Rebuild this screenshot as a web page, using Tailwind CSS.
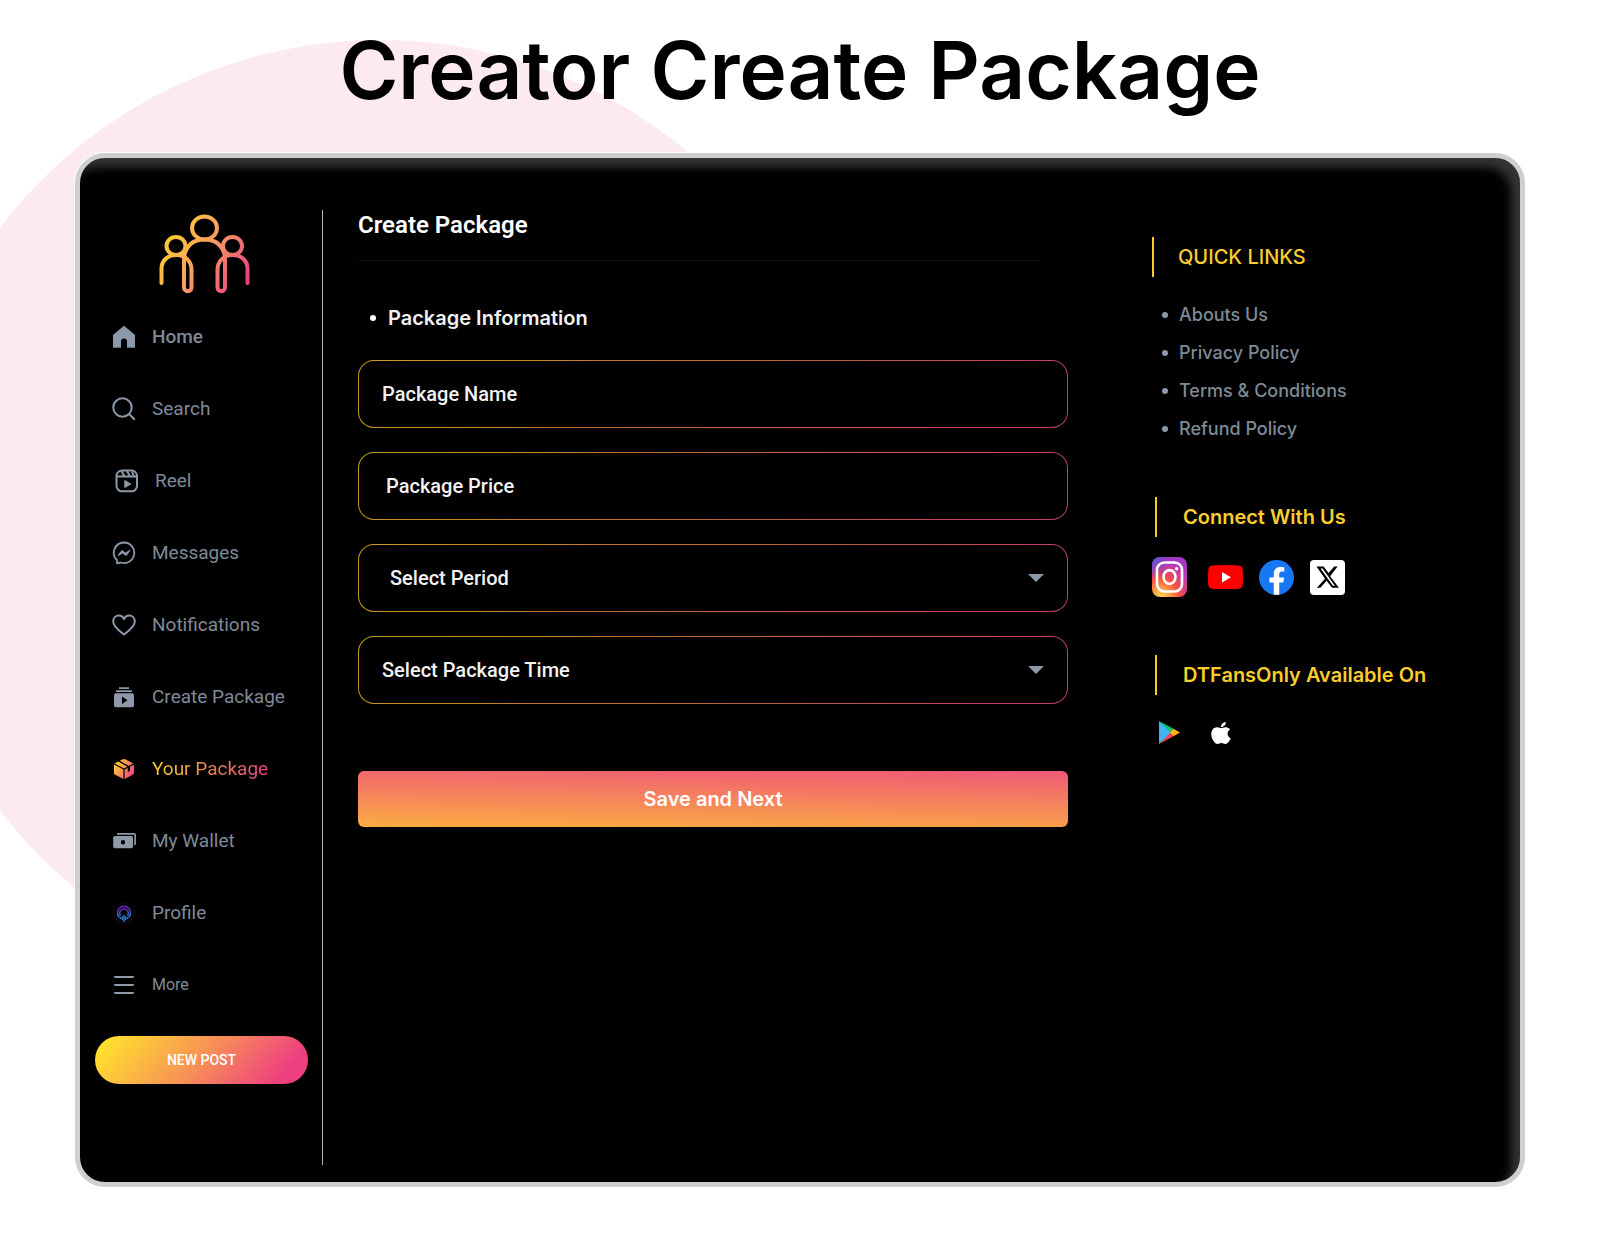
<!DOCTYPE html>
<html lang="en">
  <head>
    <meta charset="UTF-8" />
    <meta name="viewport" content="width=device-width, initial-scale=1.0" />
    <title>Creator Create Package</title>
    <script src="https://cdn.jsdelivr.net/npm/@tailwindcss/browser@4"></script>
  </head>
  <body class="bg-white font-['Inter',sans-serif]">
    <div class="relative overflow-hidden pt-5 pb-[59px]">
      <!-- Background circle -->
      <div class="absolute -left-[99px] top-10 size-[958px] rounded-full bg-[#fceaf0]"></div>

      <h1 class="relative text-center text-[80px] leading-[100px] font-semibold text-black">Creator Create Package</h1>

      <!-- Device frame -->
      <div class="relative mx-[75px] mt-[33px] rounded-[30px] border-[5px] border-[#cfcfcf] bg-black shadow-[0_0_0_1px_#fff,inset_-9px_9px_10px_#343434]">
        <div class="flex pt-[52px] pb-[17px]">

          <!-- Sidebar -->
          <aside class="w-[243px] shrink-0 border-r border-[#b5b5b5] pb-[81px] font-['Roboto',sans-serif]">
            <svg class="mx-auto block h-[91px] w-[108px]" viewBox="147 210 108 91" fill="none" stroke="url(#brand)" stroke-width="4" stroke-linecap="round">
              <defs>
                <linearGradient id="brand" gradientUnits="userSpaceOnUse" x1="165" y1="232" x2="244" y2="284">
                  <stop stop-color="#fdd32c" />
                  <stop offset=".5" stop-color="#f99a62" />
                  <stop offset="1" stop-color="#ea4080" />
                </linearGradient>
              </defs>
              <ellipse cx="204.500" cy="228" rx="12.500" ry="11.500" />
              <ellipse cx="176" cy="246" rx="9.500" ry="9" />
              <ellipse cx="232.500" cy="246" rx="9.500" ry="9" />
              <path d="M161.500 283V269C161.500 261 167 255 176.500 255S191.500 262 191.500 270V287.500A3.750 3.750 0 0 1 184 287.500V257C186 246 193 239.500 204.500 239.500S223 246 225 257V287.500A3.750 3.750 0 0 1 217.500 287.500V270C217.500 262 223 255 232.500 255S247.500 261 247.500 269V283" />
            </svg>

            <nav class="text-[19px] text-[#7f8a97]">
              <a href="#" class="flex h-18 items-center gap-4 pl-8 font-medium">
                <svg class="size-6" viewBox="0 0 24 24" fill="#8c99a9"><path d="M12 0.800L22.800 9.800Q23 10 23 10.500V22.800H15V16.500A3 3 0 0 0 9 16.500V22.800H1V10.500Q1 10 1.200 9.800Z" /></svg>
                Home
              </a>
              <a href="#" class="flex h-18 items-center gap-4 pl-8">
                <svg class="size-6" viewBox="0 0 24 24" fill="none" stroke="#8c99a9" stroke-width="2"><circle cx="10.500" cy="10.500" r="9.200" /><path d="M17 17L22.800 22.800" /></svg>
                Search
              </a>
              <a href="#" class="flex h-18 items-center gap-4 pl-[35px]">
                <svg class="size-6" viewBox="0 0 24 24" fill="none" stroke="#8c99a9" stroke-width="2">
                  <rect x="1.500" y="1.500" width="20.500" height="20.800" rx="5.500" />
                  <path d="M2 7.500H22M6.500 2L9.500 7.500M12 2L15 7.500M17 2.500L19 7.500" />
                  <path d="M9.800 11.500V18.500L15.800 15Z" fill="#8c99a9" stroke-linejoin="round" stroke-width="1" />
                </svg>
                Reel
              </a>
              <a href="#" class="flex h-18 items-center gap-4 pl-8">
                <svg class="size-6" viewBox="0 0 24 24" fill="none" stroke="#8c99a9" stroke-width="1.800">
                  <path d="M12 1.500A10.300 10.300 0 1 1 8.500 21.500L5 22.300V19.200A10.300 10.300 0 0 1 12 1.500Z" stroke-linejoin="round" />
                  <path d="M6.300 14.300L10.100 9.700L13.500 12.500L17.700 9.500L14 14.300L10.700 11.700Z" fill="#8c99a9" stroke-width="1.200" stroke-linejoin="round" />
                </svg>
                Messages
              </a>
              <a href="#" class="flex h-18 items-center gap-4 pl-8">
                <svg class="size-6" viewBox="0 0 24 24" fill="none" stroke="#8c99a9" stroke-width="2" stroke-linejoin="round"><path d="M12 21.600C9 19.100 1.200 14 1.200 8.500C1.200 4.800 3.800 2.500 6.800 2.500C9.200 2.500 11 3.800 12 6.100C13 3.800 14.800 2.500 17.200 2.500C20.200 2.500 22.800 4.800 22.800 8.500C22.800 14 15 19.100 12 21.600Z" /></svg>
                Notifications
              </a>
              <a href="#" class="flex h-18 items-center gap-4 pl-8">
                <svg class="size-6" viewBox="0 0 24 24" fill="#8c99a9">
                  <path d="M7 2.200H17V4H7ZM4 5.200H20V7H4Z" />
                  <path fill-rule="evenodd" d="M4 8.200H20A2 2 0 0 1 22 10.200V20.300A2 2 0 0 1 20 22.300H4A2 2 0 0 1 2 20.300V10.200A2 2 0 0 1 4 8.200ZM10 11.500V19L15.500 15.200Z" />
                </svg>
                Create Package
              </a>
              <a href="#" class="flex h-18 items-center gap-4 pl-8">
                <svg class="size-6" viewBox="0 0 24 24">
                  <defs>
                    <linearGradient id="box" gradientUnits="userSpaceOnUse" x1="3" y1="5" x2="22" y2="16">
                      <stop stop-color="#ffd02e" />
                      <stop offset=".5" stop-color="#f99055" />
                      <stop offset="1" stop-color="#ee4080" />
                    </linearGradient>
                  </defs>
                  <path fill="url(#box)" d="M2 7.600L11.400 12.600V22L2.800 17.500Q2 17 2 16ZM12.600 12.600L15.800 11V15L18 13.800V9.800L22 7.600V16Q22 17 21.200 17.500L12.600 22ZM2.600 6.500L6.300 4.500L15.500 9.700L12 11.500ZM7.700 3.800L10.200 2.500Q12 1.700 13.800 2.500L21.400 6.500L17 8.900Z" />
                </svg>
                <span class="bg-linear-to-r from-[#f5cf2d] via-[#ee8450] to-[#e83f82] bg-clip-text text-transparent">Your Package</span>
              </a>
              <a href="#" class="flex h-18 items-center gap-4 pl-8">
                <svg class="size-6" viewBox="0 0 24 24" fill="#8c99a9">
                  <path d="M5 4H22A2 2 0 0 1 24 6V14.500A1.500 1.500 0 0 1 22.500 16H21.800V14.500H22.300V5.700H5Z" />
                  <path fill-rule="evenodd" d="M3 7H19.200A1.800 1.800 0 0 1 21 8.800V17.500A1.800 1.800 0 0 1 19.200 19.300H3A1.800 1.800 0 0 1 1.200 17.500V8.800A1.800 1.800 0 0 1 3 7ZM11 11A2.200 2.200 0 1 0 11 15.400A2.200 2.200 0 1 0 11 11Z" />
                </svg>
                My Wallet
              </a>
              <a href="#" class="flex h-18 items-center gap-4 pl-8">
                <svg class="size-6" viewBox="0 0 24 24" fill="none">
                  <defs>
                    <linearGradient id="cast" x1="0" y1="0" x2="0" y2="1">
                      <stop stop-color="#6a1fb0" />
                      <stop offset="1" stop-color="#2a78d0" />
                    </linearGradient>
                  </defs>
                  <circle cx="12" cy="12" r="12" fill="#060608" />
                  <path d="M7.500 16.500A6.500 6.500 0 1 1 16.500 16.500" stroke="url(#cast)" stroke-width="1.500" />
                  <path d="M8.500 14.500A4.200 4.200 0 1 1 15.500 14.500" stroke="url(#cast)" stroke-width="1.500" />
                  <path d="M8.500 16.300V18M10.300 15.300V19.300M12 14V21M13.700 15.300V19.300M15.500 16.300V18" stroke="#2a84d2" stroke-width="1.300" />
                </svg>
                Profile
              </a>
              <a href="#" class="flex h-18 items-center gap-4 pl-8 text-base">
                <svg class="size-6" viewBox="0 0 24 24" stroke="#8c99a9" stroke-width="2" stroke-linecap="round"><path d="M3 4H21M3 12H21M3 20H21" /></svg>
                More
              </a>
            </nav>

            <button type="button" class="mt-[15px] ml-[15px] block h-12 w-[213px] rounded-full bg-[linear-gradient(130deg,#ffde2e_7%,#f78f57_50%,#ee4080_87%)] text-sm font-medium text-white">NEW POST</button>
          </aside>

          <!-- Package form -->
          <main class="mr-[84px] ml-[35px] min-w-0 flex-1 text-white">
            <h2 class="mr-[27px] border-b border-[#1a1012] pb-5 font-['Roboto',sans-serif] text-2xl leading-[30px] font-semibold">Create Package</h2>

            <form class="mt-[42px] text-xl text-[#f2f2f2]">
              <h3 class="flex items-center gap-3 pl-3 leading-[30px] font-semibold"><span class="size-[6px] rounded-full bg-white"></span>Package Information</h3>

              <div class="mt-[27px] flex flex-col gap-6 font-['Roboto',sans-serif] font-medium">
                <div class="rounded-2xl bg-[linear-gradient(135deg,#c9a21a,#bd6c35_45%,#c2386e)] p-px">
                  <input type="text" name="name" aria-label="Package Name" placeholder="Package Name" class="block h-[66px] w-full rounded-[15px] bg-black px-[23px] outline-none placeholder:text-[#f2f2f2]" />
                </div>
                <div class="rounded-2xl bg-[linear-gradient(135deg,#c9a21a,#bd6c35_45%,#c2386e)] p-px">
                  <input type="text" name="price" aria-label="Package Price" placeholder="Package Price" class="block h-[66px] w-full rounded-[15px] bg-black px-[27px] outline-none placeholder:text-[#f2f2f2]" />
                </div>
                <div class="relative rounded-2xl bg-[linear-gradient(135deg,#c9a21a,#bd6c35_45%,#c2386e)] p-px">
                  <select name="period" aria-label="Select Period" class="block h-[66px] w-full appearance-none rounded-[15px] bg-black px-[31px] outline-none">
                    <option>Select Period</option>
                  </select>
                  <svg class="pointer-events-none absolute top-[30px] right-6 h-2 w-4" viewBox="0 0 16 8" fill="#8c99a9"><path d="M0 0H16L8 8Z" /></svg>
                </div>
                <div class="relative rounded-2xl bg-[linear-gradient(135deg,#c9a21a,#bd6c35_45%,#c2386e)] p-px">
                  <select name="time" aria-label="Select Package Time" class="block h-[66px] w-full appearance-none rounded-[15px] bg-black px-[23px] outline-none">
                    <option>Select Package Time</option>
                  </select>
                  <svg class="pointer-events-none absolute top-[30px] right-6 h-2 w-4" viewBox="0 0 16 8" fill="#8c99a9"><path d="M0 0H16L8 8Z" /></svg>
                </div>
              </div>

              <button type="submit" class="mt-[67px] block h-14 w-full rounded-md bg-[linear-gradient(1deg,#fbac42,#f05a76)] text-xl font-semibold text-white">Save and Next</button>
            </form>
          </main>

          <!-- Links -->
          <aside class="w-[368px] shrink-0 pt-[27px] text-[#7f8a97]">
            <h3 class="flex h-10 items-center border-l-2 border-[#f9cd2e] pl-6 text-xl font-medium text-[#f9cd2e]">QUICK LINKS</h3>
            <ul class="mt-[19px] text-lg leading-[38px] font-medium">
              <li class="flex items-center gap-[11px] pl-[10px]"><span class="size-[6px] rounded-full bg-[#8c99a9]"></span><a href="#">Abouts Us</a></li>
              <li class="flex items-center gap-[11px] pl-[10px]"><span class="size-[6px] rounded-full bg-[#8c99a9]"></span><a href="#">Privacy Policy</a></li>
              <li class="flex items-center gap-[11px] pl-[10px]"><span class="size-[6px] rounded-full bg-[#8c99a9]"></span><a href="#">Terms &amp; Conditions</a></li>
              <li class="flex items-center gap-[11px] pl-[10px]"><span class="size-[6px] rounded-full bg-[#8c99a9]"></span><a href="#">Refund Policy</a></li>
            </ul>

            <h3 class="mt-[49px] ml-[3px] flex h-10 items-center border-l-2 border-[#f9cd2e] pl-[26px] text-xl font-semibold text-[#f9cd2e]">Connect With Us</h3>
            <div class="mt-5 flex items-center gap-4">
              <a href="#" aria-label="Instagram" class="mr-[5px]">
                <svg class="block h-10 w-[35px]" viewBox="0 0 35 40">
                  <defs>
                    <radialGradient id="ig" cx=".25" cy="1.050" r="1.050">
                      <stop stop-color="#fedb55" />
                      <stop offset=".2" stop-color="#fdb04a" />
                      <stop offset=".5" stop-color="#f9503f" />
                      <stop offset=".85" stop-color="#c13bb5" />
                      <stop offset="1" stop-color="#a336c4" />
                    </radialGradient>
                    <radialGradient id="igBlue" cx="0" cy="0" r=".6">
                      <stop stop-color="#3f6ad8" />
                      <stop offset="1" stop-color="#7a38c8" stop-opacity="0" />
                    </radialGradient>
                  </defs>
                  <rect width="35" height="40" rx="8" fill="url(#ig)" />
                  <rect width="35" height="40" rx="8" fill="url(#igBlue)" />
                  <rect x="5" y="5.500" width="25" height="29" rx="7.500" fill="none" stroke="#fff" stroke-width="2.600" />
                  <ellipse cx="17.500" cy="20" rx="6" ry="6.900" fill="none" stroke="#fff" stroke-width="2.600" />
                  <circle cx="24.600" cy="11.800" r="1.700" fill="#fff" />
                </svg>
              </a>
              <a href="#" aria-label="YouTube">
                <svg class="block h-6 w-[35px]" viewBox="0 0 35 24"><path fill="#f00" d="M4 .500Q17.500 -.500 31 .500Q34.500 1 34.700 5Q35.300 12 34.700 19.500Q34.500 23.300 31 23.700Q17.500 24.700 4 23.700Q.500 23.300 .300 19.500Q-.300 12 .300 5Q.500 1 4 .500Z" /><path fill="#fff" d="M14 7V17.500L23 12.200Z" /></svg>
              </a>
              <a href="#" aria-label="Facebook">
                <svg class="block size-[35px]" viewBox="0 0 24 24"><circle cx="12" cy="12" r="12" fill="#1877f2" /><path fill="#fff" d="M10.125 23.900V15.500H7.078V12.070H10.125V9.430C10.125 6.420 11.917 4.760 14.658 4.760C15.970 4.760 17.344 5 17.344 5V7.950H15.830C14.340 7.950 13.875 8.870 13.875 9.830V12.070H17.203L16.670 15.500H13.875V23.900Z" /></svg>
              </a>
              <a href="#" aria-label="X">
                <svg class="block size-[35px]" viewBox="0 0 35 35"><rect width="35" height="35" rx="4" fill="#fff" /><path transform="translate(5.200 5.200) scale(1.040)" d="M18.244 1.250h3.308l-7.227 9.260 8.502 11.240H16.170l-5.214-6.817L4.990 21.750H1.680l7.730-8.835L1.254 1.250H8.080l4.713 6.231zm-1.161 18.520h1.833L7.084 3.126H5.117z" /></svg>
              </a>
            </div>

            <h3 class="mt-[58px] ml-[3px] flex h-10 items-center border-l-2 border-[#f9cd2e] pl-[26px] text-xl font-semibold text-[#f9cd2e]">DTFansOnly Available On</h3>
            <div class="mt-[26px] flex items-center gap-[31px] pl-[7px]">
              <a href="#" aria-label="Google Play">
                <svg class="block h-[23px] w-[21px]" viewBox="0 0 21 23">
                  <path fill="#00c566" d="M0 0L14.500 7.700L10 12Z" />
                  <path fill="#f5434b" d="M0 23L14.500 15.300L10 11Z" />
                  <path fill="#fcb316" d="M14.500 7.700L21 11.500L14.500 15.300L10.300 11.500Z" />
                  <path fill="#3db4f5" d="M0 0L11.500 11.500L0 23Z" />
                </svg>
              </a>
              <a href="#" aria-label="App Store">
                <svg class="block h-[22px] w-5" viewBox="2 0 20 24" preserveAspectRatio="none" fill="#fff"><path d="M12.152 6.896c-.948 0-2.415-1.078-3.960-1.040-2.040.027-3.910 1.183-4.961 3.014-2.117 3.675-.546 9.103 1.519 12.090 1.013 1.454 2.208 3.090 3.792 3.039 1.520-.065 2.090-.987 3.935-.987 1.831 0 2.350.987 3.960.948 1.637-.026 2.676-1.480 3.676-2.948 1.156-1.688 1.636-3.325 1.662-3.415-.039-.013-3.182-1.221-3.220-4.857-.026-3.040 2.480-4.494 2.597-4.559-1.429-2.090-3.623-2.324-4.390-2.376-2-.156-3.675 1.090-4.610 1.090zM15.530 3.830c.843-1.012 1.400-2.427 1.245-3.830-1.207.052-2.662.805-3.532 1.818-.780.896-1.454 2.338-1.273 3.714 1.338.104 2.715-.688 3.559-1.701" /></svg>
              </a>
            </div>
          </aside>
        </div>
      </div>
    </div>
  </body>
</html>
